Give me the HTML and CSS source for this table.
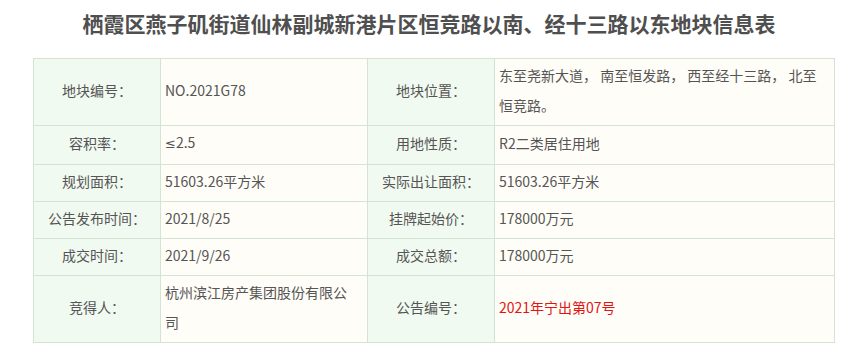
FILE: index.html
```html
<!DOCTYPE html>
<html lang="zh-CN">
<head>
<meta charset="utf-8">
<title>地块信息表</title>
<link rel="stylesheet" href="styles.css">
</head>
<body>
<div class="page">
  <h1 class="title">栖霞区燕子矶街道仙林副城新港片区恒竞路以南、经十三路以东地块信息表</h1>
  <table class="info">
    <colgroup>
      <col class="c-label"><col class="c-val"><col class="c-label2"><col class="c-val2">
    </colgroup>
    <tr class="tall">
      <td class="label">地块编号：</td>
      <td class="val">NO.2021G78</td>
      <td class="label">地块位置：</td>
      <td class="val">东至尧新大道， 南至恒发路， 西至经十三路， 北至恒竞路。</td>
    </tr>
    <tr>
      <td class="label">容积率：</td>
      <td class="val"><span class="sym">≤</span>2.5</td>
      <td class="label">用地性质：</td>
      <td class="val">R2二类居住用地</td>
    </tr>
    <tr>
      <td class="label">规划面积：</td>
      <td class="val">51603.26平方米</td>
      <td class="label">实际出让面积：</td>
      <td class="val">51603.26平方米</td>
    </tr>
    <tr>
      <td class="label">公告发布时间：</td>
      <td class="val">2021/8/25</td>
      <td class="label">挂牌起始价：</td>
      <td class="val">178000万元</td>
    </tr>
    <tr>
      <td class="label">成交时间：</td>
      <td class="val">2021/9/26</td>
      <td class="label">成交总额：</td>
      <td class="val">178000万元</td>
    </tr>
    <tr class="tall">
      <td class="label">竞得人：</td>
      <td class="val">杭州滨江房产集团股份有限公司</td>
      <td class="label">公告编号：</td>
      <td class="val red">2021年宁出第07号</td>
    </tr>
  </table>
</div>
</body>
</html>
```
FILE: styles.css
```css
html, body {
  margin: 0;
  padding: 0;
  background: #ffffff;
}
.page {
  width: 858px;
  font-family: "Noto Sans CJK SC", "Microsoft YaHei", sans-serif;
  color: #555555;
}
.title {
  margin: 0;
  height: 46px;
  line-height: 46px;
  text-align: center;
  font-size: 21px;
  font-weight: bold;
  color: #4f4f4f;
}
.info {
  margin: 12px 0 0 33px;
  border-collapse: collapse;
  table-layout: fixed;
  width: 801px;
  font-size: 14px;
}
.c-label { width: 127px; }
.c-val { width: 207px; }
.c-label2 { width: 127px; }
.c-val2 { width: 340px; }
.info td {
  border: 1px solid #d5e3d2;
  line-height: 30px;
  padding: 1px 12px 5px 4px;
  height: 30px;
  vertical-align: middle;
}
.info tr.tall td {
  height: 60px;
}
.info td.label {
  background: #f1faf0;
  text-align: center;
  padding-left: 4px;
  padding-right: 4px;
}
.info td.val {
  background: #fffdf7;
  text-align: left;
}
.info td.red {
  color: #e31414;
}
.sym {
  font-family: "DejaVu Sans", sans-serif;
  font-size: 13px;
}
```
